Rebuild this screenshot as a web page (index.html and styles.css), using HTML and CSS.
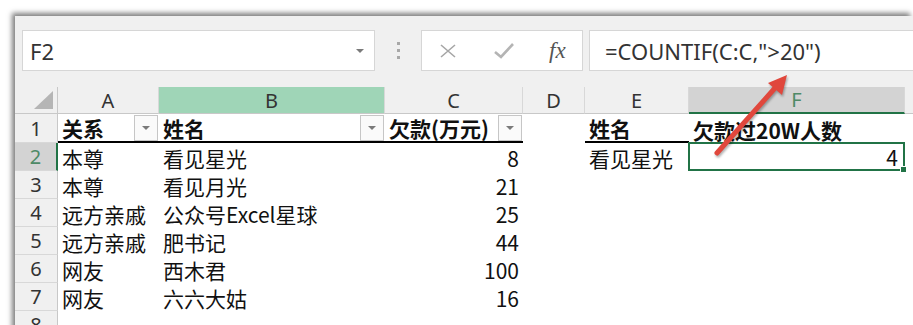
FILE: index.html
```html
<!DOCTYPE html>
<html lang="zh-CN">
<head>
    <meta charset="UTF-8">
    <meta name="viewport" content="width=device-width, initial-scale=1.0">
    <title>COUNTIF</title>
    <link rel="stylesheet" href="styles.css">
</head>
<body>
    <div id="window">
        <!-- Name box and formula bar -->
        <div class="toolbar">
            <div class="namebox">
                <span>F2</span>
                <span class="drop"></span>
            </div>
            <div class="grip"><i></i><i></i><i></i></div>
            <div class="buttons">
                <svg class="ico" width="18" height="14" viewBox="0 0 18 14">
                    <path d="M2 1 L16 13 M16 1 L2 13" stroke="#a6a6a6" stroke-width="1.6" fill="none"/>
                </svg>
                <svg class="ico" width="20" height="16" viewBox="0 0 20 16">
                    <path d="M1 9 L7 14 L19 1" stroke="#b4b4b4" stroke-width="2.6" fill="none"/>
                </svg>
                <span class="fx">fx</span>
            </div>
            <div class="formula">=COUNTIF(C:C,"&gt;20")</div>
        </div>

        <!-- Worksheet grid -->
        <div class="sheet">
            <div class="corner"><span></span></div>
            <div class="colhead">A</div>
            <div class="colhead picked">B</div>
            <div class="colhead">C</div>
            <div class="colhead">D</div>
            <div class="colhead">E</div>
            <div class="colhead current">F</div>
            <div class="colhead last"></div>

            <div class="rowhead">1</div>
            <div class="cell th">关系<span class="filter"></span></div>
            <div class="cell th">姓名<span class="filter"></span></div>
            <div class="cell th">欠款(万元)<span class="filter"></span></div>
            <div class="cell"></div>
            <div class="cell th">姓名</div>
            <div class="cell bold">欠款过20W人数</div>
            <div class="cell"></div>

            <div class="rowhead current">2</div>
            <div class="cell">本尊</div>
            <div class="cell">看见星光</div>
            <div class="cell num">8</div>
            <div class="cell"></div>
            <div class="cell">看见星光</div>
            <div class="cell num active">4<span class="handle"></span></div>
            <div class="cell"></div>

            <div class="rowhead">3</div>
            <div class="cell">本尊</div>
            <div class="cell">看见月光</div>
            <div class="cell num">21</div>
            <div class="cell"></div>
            <div class="cell"></div>
            <div class="cell"></div>
            <div class="cell"></div>

            <div class="rowhead">4</div>
            <div class="cell">远方亲戚</div>
            <div class="cell">公众号Excel星球</div>
            <div class="cell num">25</div>
            <div class="cell"></div>
            <div class="cell"></div>
            <div class="cell"></div>
            <div class="cell"></div>

            <div class="rowhead">5</div>
            <div class="cell">远方亲戚</div>
            <div class="cell">肥书记</div>
            <div class="cell num">44</div>
            <div class="cell"></div>
            <div class="cell"></div>
            <div class="cell"></div>
            <div class="cell"></div>

            <div class="rowhead">6</div>
            <div class="cell">网友</div>
            <div class="cell">西木君</div>
            <div class="cell num">100</div>
            <div class="cell"></div>
            <div class="cell"></div>
            <div class="cell"></div>
            <div class="cell"></div>

            <div class="rowhead">7</div>
            <div class="cell">网友</div>
            <div class="cell">六六大姑</div>
            <div class="cell num">16</div>
            <div class="cell"></div>
            <div class="cell"></div>
            <div class="cell"></div>
            <div class="cell"></div>

            <div class="rowhead">8</div>
            <div class="cell"></div>
            <div class="cell"></div>
            <div class="cell"></div>
            <div class="cell"></div>
            <div class="cell"></div>
            <div class="cell"></div>
            <div class="cell"></div>
        </div>
    </div>

    <!-- Red annotation arrow pointing at the formula -->
    <svg class="arrow" width="913" height="325" viewBox="0 0 913 325">
        <path d="M717 153 L775 88" stroke="#e0473c" stroke-width="5" stroke-linecap="round" fill="none"/>
        <polygon points="787,75 782,95 768,83" fill="#e0473c"/>
    </svg>
</body>
</html>
```

FILE: styles.css
```css
body {
    margin: 0;
    padding: 0;
    background-color: #fff;
    overflow: hidden;
    font-family: "Noto Sans", "Noto Sans CJK SC", sans-serif;
    color: #222;
}

#window {
    margin: 16px 0 0 15px;
    height: 320px;
    background-color: #f0f0f0;
    box-shadow: -3px -3px 5px rgba(0, 0, 0, 0.5);
}

.toolbar {
    display: flex;
    align-items: center;
    padding: 14px 0 16px 7px;
}

.namebox {
    box-sizing: border-box;
    width: 353px;
    height: 41px;
    background-color: #fff;
    border: 1px solid #d6d6d6;
    display: flex;
    align-items: center;
    justify-content: space-between;
    padding: 0 10px 0 7px;
    font-size: 22px;
    color: #333;
}

.drop {
    width: 0;
    height: 0;
    border-left: 4px solid transparent;
    border-right: 4px solid transparent;
    border-top: 4px solid #7a7a7a;
}

.grip {
    width: 46px;
    display: flex;
    flex-direction: column;
    align-items: center;
    gap: 4px;
}

.grip i {
    width: 3px;
    height: 3px;
    background-color: #a8a8a8;
}

.buttons {
    box-sizing: border-box;
    width: 162px;
    height: 41px;
    background-color: #fff;
    border: 1px solid #d6d6d6;
    display: flex;
    align-items: center;
    padding-left: 17px;
    gap: 37px;
}

.fx {
    font-family: "Liberation Serif", serif;
    font-style: italic;
    font-size: 23px;
    color: #555;
    margin-left: -2px;
}

.formula {
    box-sizing: border-box;
    flex: 1;
    height: 41px;
    margin-left: 6px;
    background-color: #fff;
    border: 1px solid #d6d6d6;
    border-right: none;
    display: flex;
    align-items: center;
    padding-left: 15px;
    font-size: 22px;
    color: #333;
}

.sheet {
    display: grid;
    grid-template-columns: 43px 101px 226px 138px 62px 104px 216px 1fr;
    grid-template-rows: 27px 29px repeat(7, 28px);
    background-color: #fff;
}

.corner {
    background-color: #f0f0f0;
    border-bottom: 1px solid #c8c8c8;
    border-right: 1px solid #c8c8c8;
    position: relative;
}

.corner span {
    position: absolute;
    right: 4px;
    bottom: 4px;
    width: 0;
    height: 0;
    border-left: 19px solid transparent;
    border-bottom: 18px solid #b5b5b5;
}

.colhead {
    background-color: #f0f0f0;
    border-bottom: 1px solid #c8c8c8;
    border-right: 1px solid #d8d8d8;
    display: flex;
    align-items: flex-end;
    justify-content: center;
    font-size: 20px;
    line-height: 25px;
    color: #333;
}

.colhead.picked {
    background-color: #9fd5b7;
}

.colhead.current {
    background-color: #d3d3d3;
    border-bottom: 2px solid #217346;
    color: #4e8a66;
}

.colhead.last {
    border-right: none;
}

.rowhead {
    background-color: #f0f0f0;
    border-bottom: 1px solid #d8d8d8;
    border-right: 1px solid #c8c8c8;
    display: flex;
    align-items: flex-end;
    justify-content: center;
    font-size: 20px;
    line-height: 26px;
    color: #333;
}

.rowhead.current {
    background-color: #d3d3d3;
    border-right: 2px solid #217346;
    color: #4e8a66;
}

.cell {
    box-sizing: border-box;
    display: flex;
    align-items: flex-end;
    padding: 0 4px;
    font-family: "Noto Sans CJK SC", sans-serif;
    font-size: 21px;
    line-height: 26px;
    color: #111;
    white-space: nowrap;
    position: relative;
}

.cell.th {
    font-weight: bold;
    border-bottom: 2px solid #000;
    justify-content: space-between;
    padding-right: 1px;
    line-height: 25px;
}

.cell.bold {
    font-weight: bold;
    line-height: 25px;
}

.filter {
    box-sizing: border-box;
    align-self: flex-start;
    margin-top: 1px;
    width: 24px;
    height: 26px;
    background-color: #fafafa;
    border: 1px solid #c6c6c6;
    display: flex;
    align-items: center;
    justify-content: center;
}

.filter::after {
    content: "";
    border-left: 4px solid transparent;
    border-right: 4px solid transparent;
    border-top: 4px solid #7a7a7a;
}

.cell.num {
    justify-content: flex-end;
}

.cell.active {
    border: 2px solid #217346;
    margin: -1px 0 0 -1px;
    padding-right: 5px;
    line-height: 24px;
}

.handle {
    position: absolute;
    right: -4px;
    bottom: -4px;
    width: 5px;
    height: 5px;
    background-color: #217346;
    border: 1px solid #fff;
}

.arrow {
    position: absolute;
    left: 0;
    top: 0;
    pointer-events: none;
    filter: drop-shadow(1px 2px 1px rgba(0, 0, 0, 0.3));
}
```
